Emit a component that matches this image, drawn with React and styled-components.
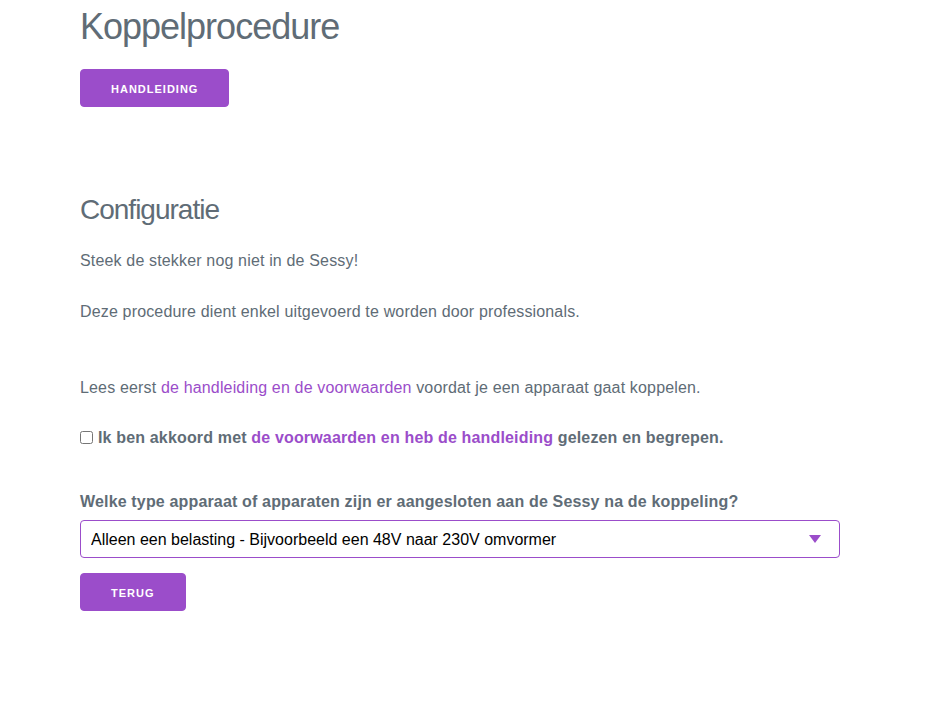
import React, {useState} from 'react';
import styled, {createGlobalStyle} from 'styled-components';

const GlobalStyle = createGlobalStyle`
  html, body {
    margin : 0;
    padding : 0;
    background : #fff;
  }
  body {
    font-family : "Liberation Sans", Arial, sans-serif;
    font-size : 16px;
    letter-spacing : .01em;
    line-height : 1.6;
    color : #606c76;
  }
`;

const purple = '#9b4dca';

const Page = styled.div`
  width : 760px;
  padding : 4px 0 40px 80px;
`;

const Title = styled.h2`
  font-size : 36px;
  font-weight : 300;
  letter-spacing : -1px;
  line-height : 1.25;
  margin : 0 0 20px;
`;

const SubTitle = styled.h3`
  font-size : 28px;
  font-weight : 300;
  letter-spacing : -1px;
  line-height : 1.3;
  margin : 85px 0 20px;
`;

const Button = styled.button`
  display : block;
  height : 38px;
  padding : 0 30px;
  border : 1px solid ${purple};
  border-radius : 4px;
  background : ${purple};
  color : #fff;
  font-family : inherit;
  font-size : 11px;
  font-weight : 700;
  letter-spacing : 1px;
  line-height : 38px;
  text-transform : uppercase;
  cursor : pointer;
`;

const Text = styled.p`
  margin : 0 0 ${p => p.$gap || 25}px;
`;

const Link = styled.a`
  color : ${purple};
  text-decoration : none;
`;

const CheckRow = styled.label`
  display : flex;
  align-items : center;
  font-weight : 700;
  margin-bottom : 38px;

  input{
    width : 13px;
    height : 13px;
    margin : 0 5px 0 0;
  }
`;

const FieldLabel = styled.label`
  display : block;
  font-weight : 700;
  margin-bottom : 6px;
`;

const SelectWrap = styled.div`
  position : relative;
  margin-bottom : 15px;
`;

const Select = styled.select`
  appearance : none;
  -webkit-appearance : none;
  box-sizing : border-box;
  width : 100%;
  height : 38px;
  padding : 6px 30px 6px 10px;
  border : 1px solid ${purple};
  border-radius : 4px;
  background : #fff;
  color : #000;
  font-family : inherit;
  font-size : 16px;
  outline : none;
`;

const Arrow = styled.svg`
  position : absolute;
  right : 19px;
  top : 15px;
  pointer-events : none;
`;

export default function App() {
  const [agree, setAgree] = useState(false);
  const [type, setType] = useState('load');

  return (
    <>
      <GlobalStyle />
      <Page>
        <Title>Koppelprocedure</Title>
        <Button>Handleiding</Button>

        <SubTitle>Configuratie</SubTitle>
        <Text>Steek de stekker nog niet in de Sessy!</Text>
        <Text $gap={50}>Deze procedure dient enkel uitgevoerd te worden door professionals.</Text>
        <Text>
          Lees eerst <Link href="#">de handleiding en de voorwaarden</Link> voordat je een apparaat gaat koppelen.
        </Text>

        <CheckRow>
          <input type="checkbox" checked={agree} onChange={(e) => setAgree(e.target.checked)} />
          <span>Ik ben akkoord met <Link href="#">de voorwaarden en heb de handleiding</Link> gelezen en begrepen.</span>
        </CheckRow>

        <FieldLabel htmlFor="type">Welke type apparaat of apparaten zijn er aangesloten aan de Sessy na de koppeling?</FieldLabel>
        <SelectWrap>
          <Select id="type" value={type} onChange={(e) => setType(e.target.value)}>
            <option value="load">Alleen een belasting - Bijvoorbeeld een 48V naar 230V omvormer</option>
            <option value="source">Alleen een bron</option>
            <option value="both">Een bron en een belasting</option>
          </Select>
          <Arrow width="12" height="8" viewBox="0 0 12 8">
            <path d="M0 0L6 8L12 0Z" fill={purple} />
          </Arrow>
        </SelectWrap>

        <Button>Terug</Button>
      </Page>
    </>
  );
}
